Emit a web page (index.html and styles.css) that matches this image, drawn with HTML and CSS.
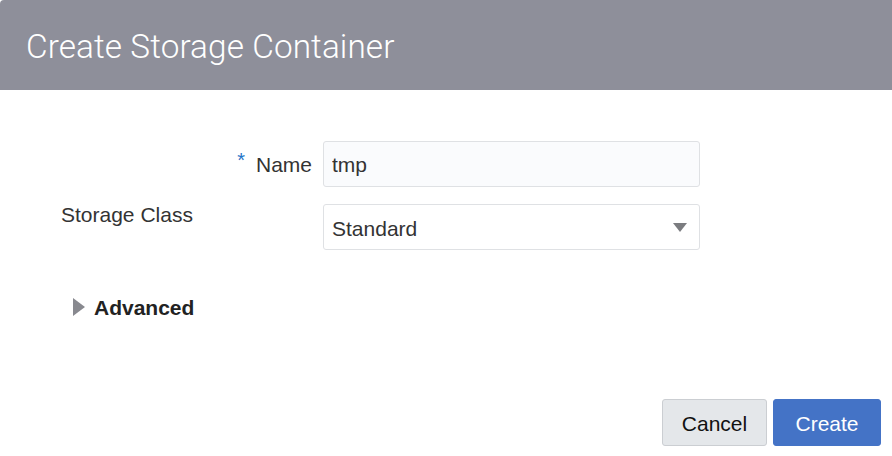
FILE: index.html
```html
<!DOCTYPE html>
<html lang="en">
<head>
<meta charset="utf-8">
<title>Create Storage Container</title>
<link rel="stylesheet" href="styles.css">
</head>
<body>
<div class="dialog">
  <header class="dialog-header">
    <h1 class="dialog-title">Create Storage Container</h1>
  </header>
  <main class="dialog-body">
    <div class="form-grid">
      <label class="label label-name" for="name"><span class="required">*</span>Name</label>
      <input class="field field-input" id="name" type="text" value="tmp">
      <label class="label label-class" for="cls">Storage Class</label>
      <div class="field field-select" id="cls">
        <span class="select-value">Standard</span>
        <span class="caret"></span>
      </div>
    </div>
    <div class="advanced">
      <span class="disclosure"></span>
      <span class="advanced-text">Advanced</span>
    </div>
  </main>
  <footer class="dialog-footer">
    <button class="btn btn-cancel" type="button">Cancel</button>
    <button class="btn btn-create" type="button">Create</button>
  </footer>
</div>
</body>
</html>
```
FILE: styles.css
```css
* { box-sizing: border-box; }
html, body { margin: 0; padding: 0; background: #ffffff; }
body { font-family: "Liberation Sans", Arial, sans-serif; color: #333333; }

.dialog {
  width: 892px;
  height: 456px;
  display: flex;
  flex-direction: column;
  background: #ffffff;
  overflow: hidden;
}

.dialog-header {
  height: 90px;
  flex: none;
  background: #8e8f9a;
  border-top-left-radius: 4px;
  padding-left: 26px;
  display: flex;
  align-items: center;
}
.dialog-title {
  margin: 0;
  padding-top: 3px;
  font-family: "Roboto", "Liberation Sans", sans-serif;
  font-weight: 300;
  font-size: 33.3px;
  color: #ffffff;
  letter-spacing: 0.1px;
}

.dialog-body {
  flex: 1;
  padding-top: 51px;
  padding-left: 61px;
}

.form-grid {
  display: grid;
  grid-template-columns: 251px 377px;
  column-gap: 11px;
  row-gap: 17px;
}

.label {
  font-size: 21px;
  color: #333333;
  line-height: 24px;
}
.label-name {
  text-align: right;
  padding-top: 12px;
}
.required {
  color: #1f74c8;
  font-size: 20px;
  vertical-align: top;
  position: relative;
  top: -5px;
  margin-right: 11px;
}
.label-class {
  margin-top: -1px;
}

.field {
  height: 46px;
  border: 1px solid #dfe1e4;
  border-radius: 3px;
  font-family: "Liberation Sans", Arial, sans-serif;
  font-size: 21px;
  color: #333333;
  padding: 1px 8px 0;
}
.field-input {
  background: #fafbfd;
  outline: none;
  width: 377px;
}
.field-select {
  background: #ffffff;
  display: flex;
  align-items: center;
  justify-content: space-between;
  padding-right: 12px;
}
.select-value {
  padding-top: 3px;
}
.caret {
  width: 0;
  height: 0;
  border-left: 7px solid transparent;
  border-right: 7px solid transparent;
  border-top: 9px solid #7b7c80;
}

.advanced {
  margin-top: 47px;
  margin-left: 12px;
  display: flex;
  align-items: center;
  gap: 9px;
  height: 20px;
}
.disclosure {
  width: 0;
  height: 0;
  border-top: 9px solid transparent;
  border-bottom: 9px solid transparent;
  border-left: 12px solid #88898f;
}
.advanced-text {
  font-size: 21px;
  font-weight: bold;
  color: #222222;
  padding-top: 2px;
}

.dialog-footer {
  flex: none;
  display: flex;
  justify-content: flex-end;
  gap: 6px;
  padding: 0 11px 10px 0;
}
.btn {
  height: 47px;
  border-radius: 3px;
  font-family: "Liberation Sans", Arial, sans-serif;
  font-size: 21px;
  padding: 0;
  padding-top: 2px;
  cursor: pointer;
}
.btn-cancel {
  width: 105px;
  background: #e4e7ea;
  border: 1px solid #cbced2;
  color: #111111;
}
.btn-create {
  width: 108px;
  background: #4473c6;
  border: 1px solid #4473c6;
  color: #ffffff;
}
```
